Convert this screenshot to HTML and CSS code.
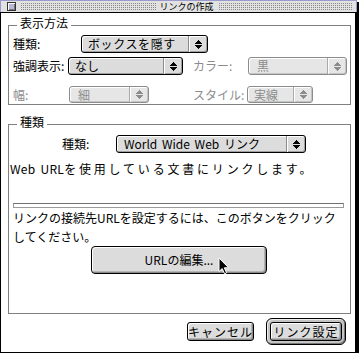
FILE: index.html
```html
<!DOCTYPE html>
<html lang="ja">
<head>
  <meta charset="UTF-8">
  <title>リンクの作成</title>
  <link rel="stylesheet" href="styles.css">
</head>
<body>

<div class="window">
  <div class="titlebar">
    <span class="closebox"></span>
    <span class="stripes"></span>
    <span class="title">リンクの作成</span>
    <span class="stripes"></span>
  </div>

  <div class="content">
    <div class="group group-look">
      <div class="group-title">表示方法</div>

      <div class="row row-1">
        <span class="lbl lbl-type">種類:</span>
        <div class="popup w-box">
          <span class="popup-text">ボックスを隠す</span>
          <span class="popup-arrows"><svg width="7" height="9" viewBox="0 0 7 9"><path d="M3 0h1v1h1v1h1v1h1v1H0V3h1V2h1V1h1z M0 5h7v1h-1v1h-1v1h-1v1h-1v-1h-1v-1h-1v-1h-1z"/></svg></span>
        </div>
      </div>

      <div class="row row-2">
        <span class="lbl lbl-hl">強調表示:</span>
        <div class="popup w-hl">
          <span class="popup-text">なし</span>
          <span class="popup-arrows"><svg width="7" height="9" viewBox="0 0 7 9"><path d="M3 0h1v1h1v1h1v1h1v1H0V3h1V2h1V1h1z M0 5h7v1h-1v1h-1v1h-1v1h-1v-1h-1v-1h-1v-1h-1z"/></svg></span>
        </div>
        <span class="lbl lbl-color off">カラー:</span>
        <div class="popup w-color off">
          <span class="popup-text">黒</span>
          <span class="popup-arrows"><svg width="7" height="9" viewBox="0 0 7 9"><path d="M3 0h1v1h1v1h1v1h1v1H0V3h1V2h1V1h1z M0 5h7v1h-1v1h-1v1h-1v1h-1v-1h-1v-1h-1v-1h-1z"/></svg></span>
        </div>
      </div>

      <div class="row row-3">
        <span class="lbl lbl-width off">幅:</span>
        <div class="popup w-width off">
          <span class="popup-text">細</span>
          <span class="popup-arrows"><svg width="7" height="9" viewBox="0 0 7 9"><path d="M3 0h1v1h1v1h1v1h1v1H0V3h1V2h1V1h1z M0 5h7v1h-1v1h-1v1h-1v1h-1v-1h-1v-1h-1v-1h-1z"/></svg></span>
        </div>
        <span class="lbl lbl-style off">スタイル:</span>
        <div class="popup w-style off">
          <span class="popup-text">実線</span>
          <span class="popup-arrows"><svg width="7" height="9" viewBox="0 0 7 9"><path d="M3 0h1v1h1v1h1v1h1v1H0V3h1V2h1V1h1z M0 5h7v1h-1v1h-1v1h-1v1h-1v-1h-1v-1h-1v-1h-1z"/></svg></span>
        </div>
      </div>
    </div>

    <div class="group group-kind">
      <div class="group-title">種類</div>

      <div class="row row-kind">
        <span class="lbl lbl-kind">種類:</span>
        <div class="popup w-kind">
          <span class="popup-text">World Wide Web リンク</span>
          <span class="popup-arrows"><svg width="7" height="9" viewBox="0 0 7 9"><path d="M3 0h1v1h1v1h1v1h1v1H0V3h1V2h1V1h1z M0 5h7v1h-1v1h-1v1h-1v1h-1v-1h-1v-1h-1v-1h-1z"/></svg></span>
        </div>
      </div>

      <p class="desc"><span class="latin">Web URL</span>を使用している文書にリンクします。</p>
      <div class="url-field"></div>
      <p class="hint">リンクの接続先URLを設定するには、このボタンをクリックしてください。</p>

      <button class="btn btn-url">URLの編集...</button>
    </div>

    <div class="actions">
      <button class="btn btn-small">キャンセル</button>
      <span class="default-ring"><button class="btn btn-small btn-ok">リンク設定</button></span>
    </div>
  </div>

  <svg class="cursor" width="12" height="18" viewBox="0 0 12 18"><path d="M1 1V14.5L4.2 11.6L6.6 16.8L8.6 15.9L6.3 10.8H10.6Z" fill="#000" stroke="#fff" stroke-width="1"/></svg>
</div>

</body>
</html>
```

FILE: styles.css
```css
body {
  margin: 0;
  background: #fff;
  color: #000;
  font: 12px/14px "Noto Sans CJK JP", "Noto Sans", sans-serif;
}
.window {
  position: relative;
  width: 357px;
  height: 353px;
  display: flex;
  flex-direction: column;
  box-shadow: 2px 2px 0 #000;
}

/* title bar */
.titlebar {
  height: 11px;
  flex: none;
  display: flex;
  align-items: center;
  padding: 0 3px 0 6px;
  background: #e2e2e2;
  border: 1px solid #9a9acc;
  border-bottom: 0;
}
.closebox {
  width: 7px;
  height: 7px;
  border: 1px solid #333;
  background: #b8b8d8;
  box-shadow: inset 1px 1px #fff, inset -1px -1px #777;
}
.stripes {
  flex: 1;
  height: 7px;
  margin-left: 4px;
  background: conic-gradient(#888 25%, transparent 0) 0 0 / 2px 2px;
}
.stripes:last-child { margin-left: 0; }
.title {
  padding: 0 4px;
  font-size: 9px;
  line-height: 11px;
}

/* dialog body */
.content {
  flex: 1;
  display: flex;
  flex-direction: column;
  background: #fff;
  border: 1px solid #000;
  border-right-width: 2px;
}
.group {
  display: flex;
  flex-direction: column;
  width: 341px;
  margin-left: 7px;
  border: 1px solid #808080;
}
.group-look {
  margin-top: 12px;
  padding-bottom: 1px;
}
.group-kind {
  margin-top: 19px;
  padding-bottom: 39px;
}
.group-title {
  align-self: flex-start;
  margin: -10px 0 0 8px;
  padding: 0 3px;
  background: #fff;
}

.row {
  display: flex;
  align-items: center;
  height: 18px;
  padding-left: 4px;
}
.row-1 { margin-top: 5px; }
.row-2 { margin-top: 4px; }
.row-3 { margin-top: 11px; height: 17px; }
.row-kind { margin-top: 6px; }

.lbl { flex: none; white-space: nowrap; }
.lbl-type { width: 68px; }
.lbl-hl { width: 55px; }
.lbl-color { width: 55px; margin-left: 10px; }
.lbl-width { width: 56px; }
.lbl-style { width: 54px; margin-left: 44px; }
.lbl-kind { width: 54px; margin-left: 49px; }
.off { color: #8c8c8c; }

/* popup menus */
.popup {
  flex: none;
  display: flex;
  align-items: stretch;
  height: 100%;
  box-sizing: border-box;
  border: 1px solid #000;
  border-radius: 3px;
  background: #dcdcdc;
  box-shadow: inset 1px 1px #fff, inset -1px -1px #a0a0a0;
}
.popup.off {
  border-color: #8c8c8c;
  background: #e6e6e6;
  box-shadow: inset 1px 1px #fff, inset -1px -1px #c4c4c4;
}
.popup-text {
  flex: 1;
  display: flex;
  align-items: center;
  padding-left: 6px;
  white-space: nowrap;
  overflow: hidden;
}
.popup-arrows {
  width: 18px;
  display: flex;
  align-items: center;
  justify-content: center;
  border-left: 1px solid #8c8c8c;
  box-shadow: inset 1px 0 #fff;
}
.popup-arrows svg { fill: #000; }
.popup.off .popup-arrows { border-left-color: #aaa; }
.popup.off .popup-arrows svg { fill: #8c8c8c; }
.w-box { width: 127px; letter-spacing: 0.6px; }
.w-hl { width: 115px; }
.w-color { width: 99px; padding-left: 2px; }
.w-width { width: 80px; padding-left: 2px; }
.w-style { width: 66px; }
.w-kind { width: 190px; }
.w-kind .popup-text { padding-left: 7px; word-spacing: 2px; }

.desc {
  margin: 9px 0 0;
  padding-left: 1px;
  letter-spacing: 2.8px;
  white-space: nowrap;
}
.desc .latin { letter-spacing: 0.3px; word-spacing: 2px; }
.url-field {
  width: 331px;
  height: 5px;
  box-sizing: border-box;
  margin: 27px 0 0 4px;
  border: 1px solid #9a9a9a;
  border-top-color: #707070;
}
.hint {
  margin: 0;
  padding: 0 4px;
  line-height: 19px;
}

/* buttons */
.btn {
  font: inherit;
  color: #000;
  padding: 0;
  border: 1px solid #000;
  border-radius: 4px;
  background: #dcdcdc;
  box-shadow: inset 1px 1px #fff, inset -1px -1px #8a8a8a, inset -2px -2px #b4b4b4;
}
.btn-url {
  width: 176px;
  height: 28px;
  margin-left: 82px;
}
.actions {
  display: flex;
  justify-content: flex-end;
  align-items: center;
  gap: 12px;
  margin-top: 4px;
  padding-right: 9px;
}
.btn-small {
  width: 67px;
  height: 19px;
  line-height: 17px;
  border-radius: 3px;
  letter-spacing: 1px;
}
.default-ring {
  display: flex;
  padding: 3px;
  border: 1px solid #000;
  border-radius: 6px;
  background: #c4c4c4;
  box-shadow: inset 1px 1px #eee, inset -1px -1px #777;
}
.btn-ok { width: 72px; }

.cursor {
  position: absolute;
  left: 218px;
  top: 257px;
}
```
